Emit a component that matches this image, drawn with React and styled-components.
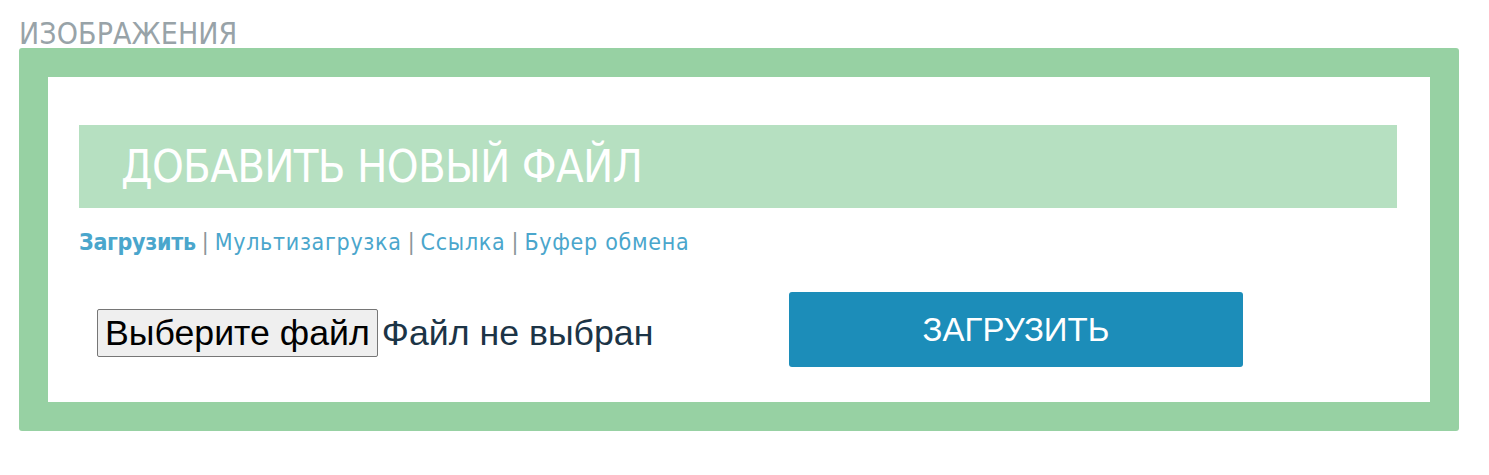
import styled, { createGlobalStyle } from 'styled-components';

const GlobalStyle = createGlobalStyle`
  body {
    margin: 0;
    background: #fff;
    font-family: "DejaVu Sans Condensed", "DejaVu Sans", sans-serif;
  }
`;

function App() {
  return (
    <>
      <GlobalStyle />
      <Page>
        <SectionTitle>ИЗОБРАЖЕНИЯ</SectionTitle>
        <Frame>
          <Inner>
            <Banner>ДОБАВИТЬ НОВЫЙ ФАЙЛ</Banner>
            <Tabs>
              <TabLink $active>Загрузить</TabLink>
              <Sep>|</Sep>
              <TabLink>Мультизагрузка</TabLink>
              <Sep>|</Sep>
              <TabLink>Ссылка</TabLink>
              <Sep>|</Sep>
              <TabLink>Буфер обмена</TabLink>
            </Tabs>
            <UploadRow>
              <FilePicker>
                <PickButton>Выберите файл</PickButton>
                <FileStatus>Файл не выбран</FileStatus>
              </FilePicker>
              <UploadButton>ЗАГРУЗИТЬ</UploadButton>
            </UploadRow>
          </Inner>
        </Frame>
      </Page>
    </>
  );
}

const Page = styled.div`
  padding: 20px 30px 40px 19px;
  width: 1440px;
`;

const SectionTitle = styled.div`
  color: #98a3a8;
  font-size: 30px;
  line-height: 28px;
  height: 28px;
  letter-spacing: 0.1px;
`;

const Frame = styled.div`
  background: #97d1a3;
  border-radius: 3px;
  padding: 29px;
`;

const Inner = styled.div`
  background: #fff;
  padding: 48px 33px 35px 31px;
`;

const Banner = styled.div`
  background: #b6e0c1;
  color: #fff;
  height: 83px;
  display: flex;
  align-items: center;
  padding-left: 42px;
  font-size: 45px;
  letter-spacing: -0.7px;
`;

const Tabs = styled.div`
  display: flex;
  align-items: center;
  gap: 6px;
  margin-top: 21px;
  font-size: 23px;
  line-height: 26px;
`;

const TabLink = styled.span`
  color: #4aa6cc;
  font-weight: ${(p) => (p.$active ? 700 : 400)};
  letter-spacing: ${(p) => (p.$active ? '-0.3px' : '0.7px')};
`;

const Sep = styled.span`
  color: #8a9499;
`;

const UploadRow = styled.div`
  display: flex;
  align-items: center;
  margin-top: 37px;
  padding-left: 18px;
`;

const FilePicker = styled.div`
  display: flex;
  align-items: center;
  width: 692px;
  margin-top: 7px;
  font-family: "Liberation Sans", Arial, sans-serif;
  font-size: 35.7px;
`;

const PickButton = styled.button`
  font: inherit;
  color: #000;
  background: #efefef;
  border: 1px solid #767676;
  border-radius: 2px;
  height: 48px;
  padding: 0 7px;
  margin-right: 4px;
`;

const FileStatus = styled.span`
  color: #1c3446;
`;

const UploadButton = styled.button`
  width: 454px;
  height: 75px;
  background: #1c8db9;
  color: #fff;
  border: none;
  border-radius: 3px;
  font-family: "Liberation Sans", Arial, sans-serif;
  font-size: 33px;
`;

export default App;
